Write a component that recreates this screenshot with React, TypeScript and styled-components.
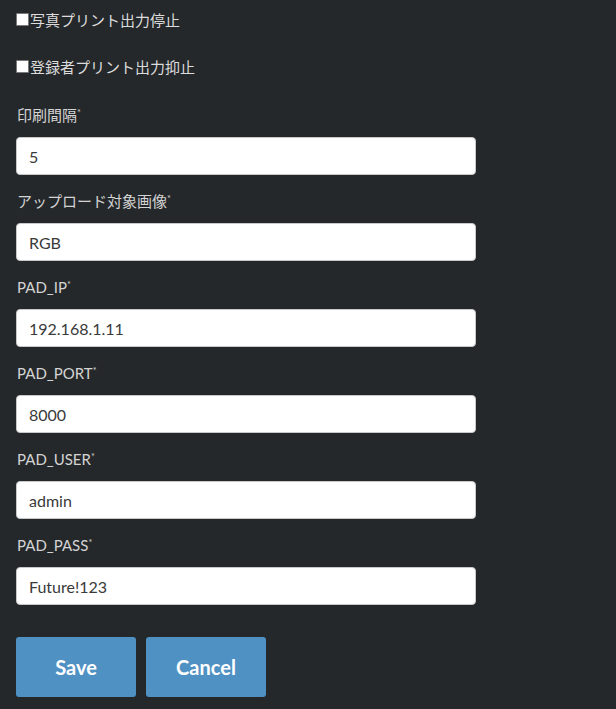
import styled, { createGlobalStyle } from "styled-components";

const GlobalStyle = createGlobalStyle`
  html, body {
    margin: 0;
    background: #25282b;
  }
  body {
    font-family: "Lato", "Noto Sans CJK JP", sans-serif;
  }
`;

const fields = [
  { label: "印刷間隔", value: "5" },
  { label: "アップロード対象画像", value: "RGB" },
  { label: "PAD_IP", value: "192.168.1.11" },
  { label: "PAD_PORT", value: "8000" },
  { label: "PAD_USER", value: "admin" },
  { label: "PAD_PASS", value: "Future!123" },
];

export default function App() {
  return (
    <Page>
      <GlobalStyle />
      <CheckRow>
        <Check type="checkbox" />
        写真プリント出力停止
      </CheckRow>
      <CheckRow>
        <Check type="checkbox" />
        登録者プリント出力抑止
      </CheckRow>
      {fields.map((f) => (
        <Field key={f.label}>
          <Label>
            {f.label}
            <Req>*</Req>
          </Label>
          <Input type="text" defaultValue={f.value} />
        </Field>
      ))}
      <Buttons>
        <Button>Save</Button>
        <Button>Cancel</Button>
      </Buttons>
    </Page>
  );
}

const Page = styled.div`
  padding: 8px 16px 12px;
  display: flex;
  flex-direction: column;
`;

const CheckRow = styled.label`
  display: flex;
  align-items: center;
  height: 22px;
  margin-bottom: 25px;
  color: #dcdcdc;
  font-size: 15px;
  font-family: "Noto Sans CJK JP", sans-serif;
`;

const Check = styled.input`
  appearance: none;
  width: 13px;
  height: 13px;
  margin: 0 1px 0 0;
  background: #fff;
  border: 1px solid #7a7a7a;
  border-radius: 1px;
`;

const Field = styled.div`
  display: flex;
  flex-direction: column;
  margin-bottom: 13px;
`;

const Label = styled.label`
  line-height: 22px;
  height: 22px;
  margin: 0 0 13px 1px;
  color: #d4d4d4;
  font-size: 15px;
`;

const Req = styled.sup`
  font-size: 9px;
  vertical-align: 5px;
  margin-left: 0;
`;

const Input = styled.input`
  box-sizing: border-box;
  width: 460px;
  height: 38px;
  padding: 0 12px;
  border: 1px solid #c8c8c8;
  border-radius: 4px;
  background: #fff;
  color: #3a3a3a;
  font-family: "Lato", sans-serif;
  font-size: 16px;
  outline: none;
`;

const Buttons = styled.div`
  display: flex;
  gap: 10px;
  margin-top: 19px;
`;

const Button = styled.button`
  width: 120px;
  height: 60px;
  border: none;
  border-radius: 3px;
  background: #4f91c3;
  color: #fff;
  font-family: "Lato", sans-serif;
  font-weight: 700;
  font-size: 20px;
  cursor: pointer;
`;
